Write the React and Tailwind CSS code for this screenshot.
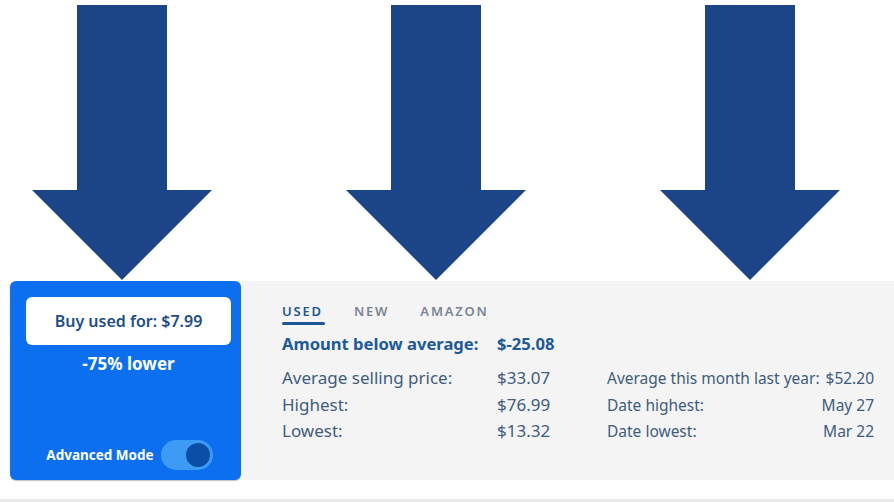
import React from "react";

const arrowOffsets = [0, 314, 628];

function Arrows() {
  return (
    <svg width="894" height="281" viewBox="0 0 894 281" className="block">
      {arrowOffsets.map((dx) => (
        <polygon
          key={dx}
          transform={`translate(${dx} 0)`}
          points="77,5 167,5 167,190 212,190 122,280 32,190 77,190"
          fill="#1c4587"
        />
      ))}
    </svg>
  );
}

const leftRows = [
  ["Average selling price:", "$33.07"],
  ["Highest:", "$76.99"],
  ["Lowest:", "$13.32"],
];

const rightRows = [
  ["Average this month last year:", "$52.20"],
  ["Date highest:", "May 27"],
  ["Date lowest:", "Mar 22"],
];

export default function App() {
  return (
    <div
      className="w-[894px] h-[502px] bg-white overflow-hidden flex flex-col"
      style={{ fontFamily: '"Noto Sans", "Open Sans", sans-serif' }}
    >
      <Arrows />

      <div className="flex h-[199px]">
        {/* Buy box */}
        <div className="ml-[10px] w-[231px] bg-[#0b6ff0] rounded-md flex flex-col items-center pl-4 pr-[10px] pt-4 pb-[10px] shadow-[0_1px_1px_rgba(0,0,0,0.25)]">
          <div className="w-full h-12 bg-white rounded-md flex items-center justify-center text-[#1d4e8a] text-[16px] font-semibold">
            Buy used for: $7.99
          </div>
          <div className="mt-[6px] text-white text-[17px] font-bold">-75% lower</div>
          <div className="mt-auto flex items-center gap-[7px] pl-[2px]">
            <span className="text-white text-[13.5px] font-bold">Advanced Mode</span>
            <div className="w-[52px] h-[30px] rounded-full bg-[#3d9bf6] flex items-center justify-end pr-[3px]">
              <div className="w-[24px] h-[24px] rounded-full bg-[#0b4ea8]" />
            </div>
          </div>
        </div>

        {/* Stats panel */}
        <div className="flex-1 bg-[#f4f4f4] pl-[41px] pt-[20px]">
          <div className="flex gap-[31px] text-[13px] font-semibold tracking-[0.14em] h-[24px]">
            <div className="text-[#1d5796] flex flex-col">
              <span className="leading-[20px]">USED</span>
              <span className="h-[3px] bg-[#1d5796] rounded-full mt-[1px] mr-[-2px]" />
            </div>
            <span className="text-[#7a8593] leading-[20px]">NEW</span>
            <span className="text-[#7a8593] leading-[20px]">AMAZON</span>
          </div>

          <div className="flex mt-[2px] text-[16.6px] font-bold text-[#1d5a99] leading-[34px]">
            <span className="w-[215px]">Amount below average:</span>
            <span>$-25.08</span>
          </div>

          <div className="flex mt-[4px] text-[#3e5d7e] leading-[26.5px]">
            <div className="w-[325px] grid grid-cols-[215px_auto] content-start text-[17px]">
              {leftRows.map(([label, value]) => (
                <React.Fragment key={label}>
                  <span>{label}</span>
                  <span>{value}</span>
                </React.Fragment>
              ))}
            </div>
            <div className="w-[267px] grid grid-cols-[1fr_auto] content-start text-[15.5px]">
              {rightRows.map(([label, value]) => (
                <React.Fragment key={label}>
                  <span className="whitespace-nowrap">{label}</span>
                  <span className="text-right">{value}</span>
                </React.Fragment>
              ))}
            </div>
          </div>
        </div>
      </div>

      <div className="flex-1" />
      <div className="h-[3px] bg-[#e8e8e8]" />
    </div>
  );
}
